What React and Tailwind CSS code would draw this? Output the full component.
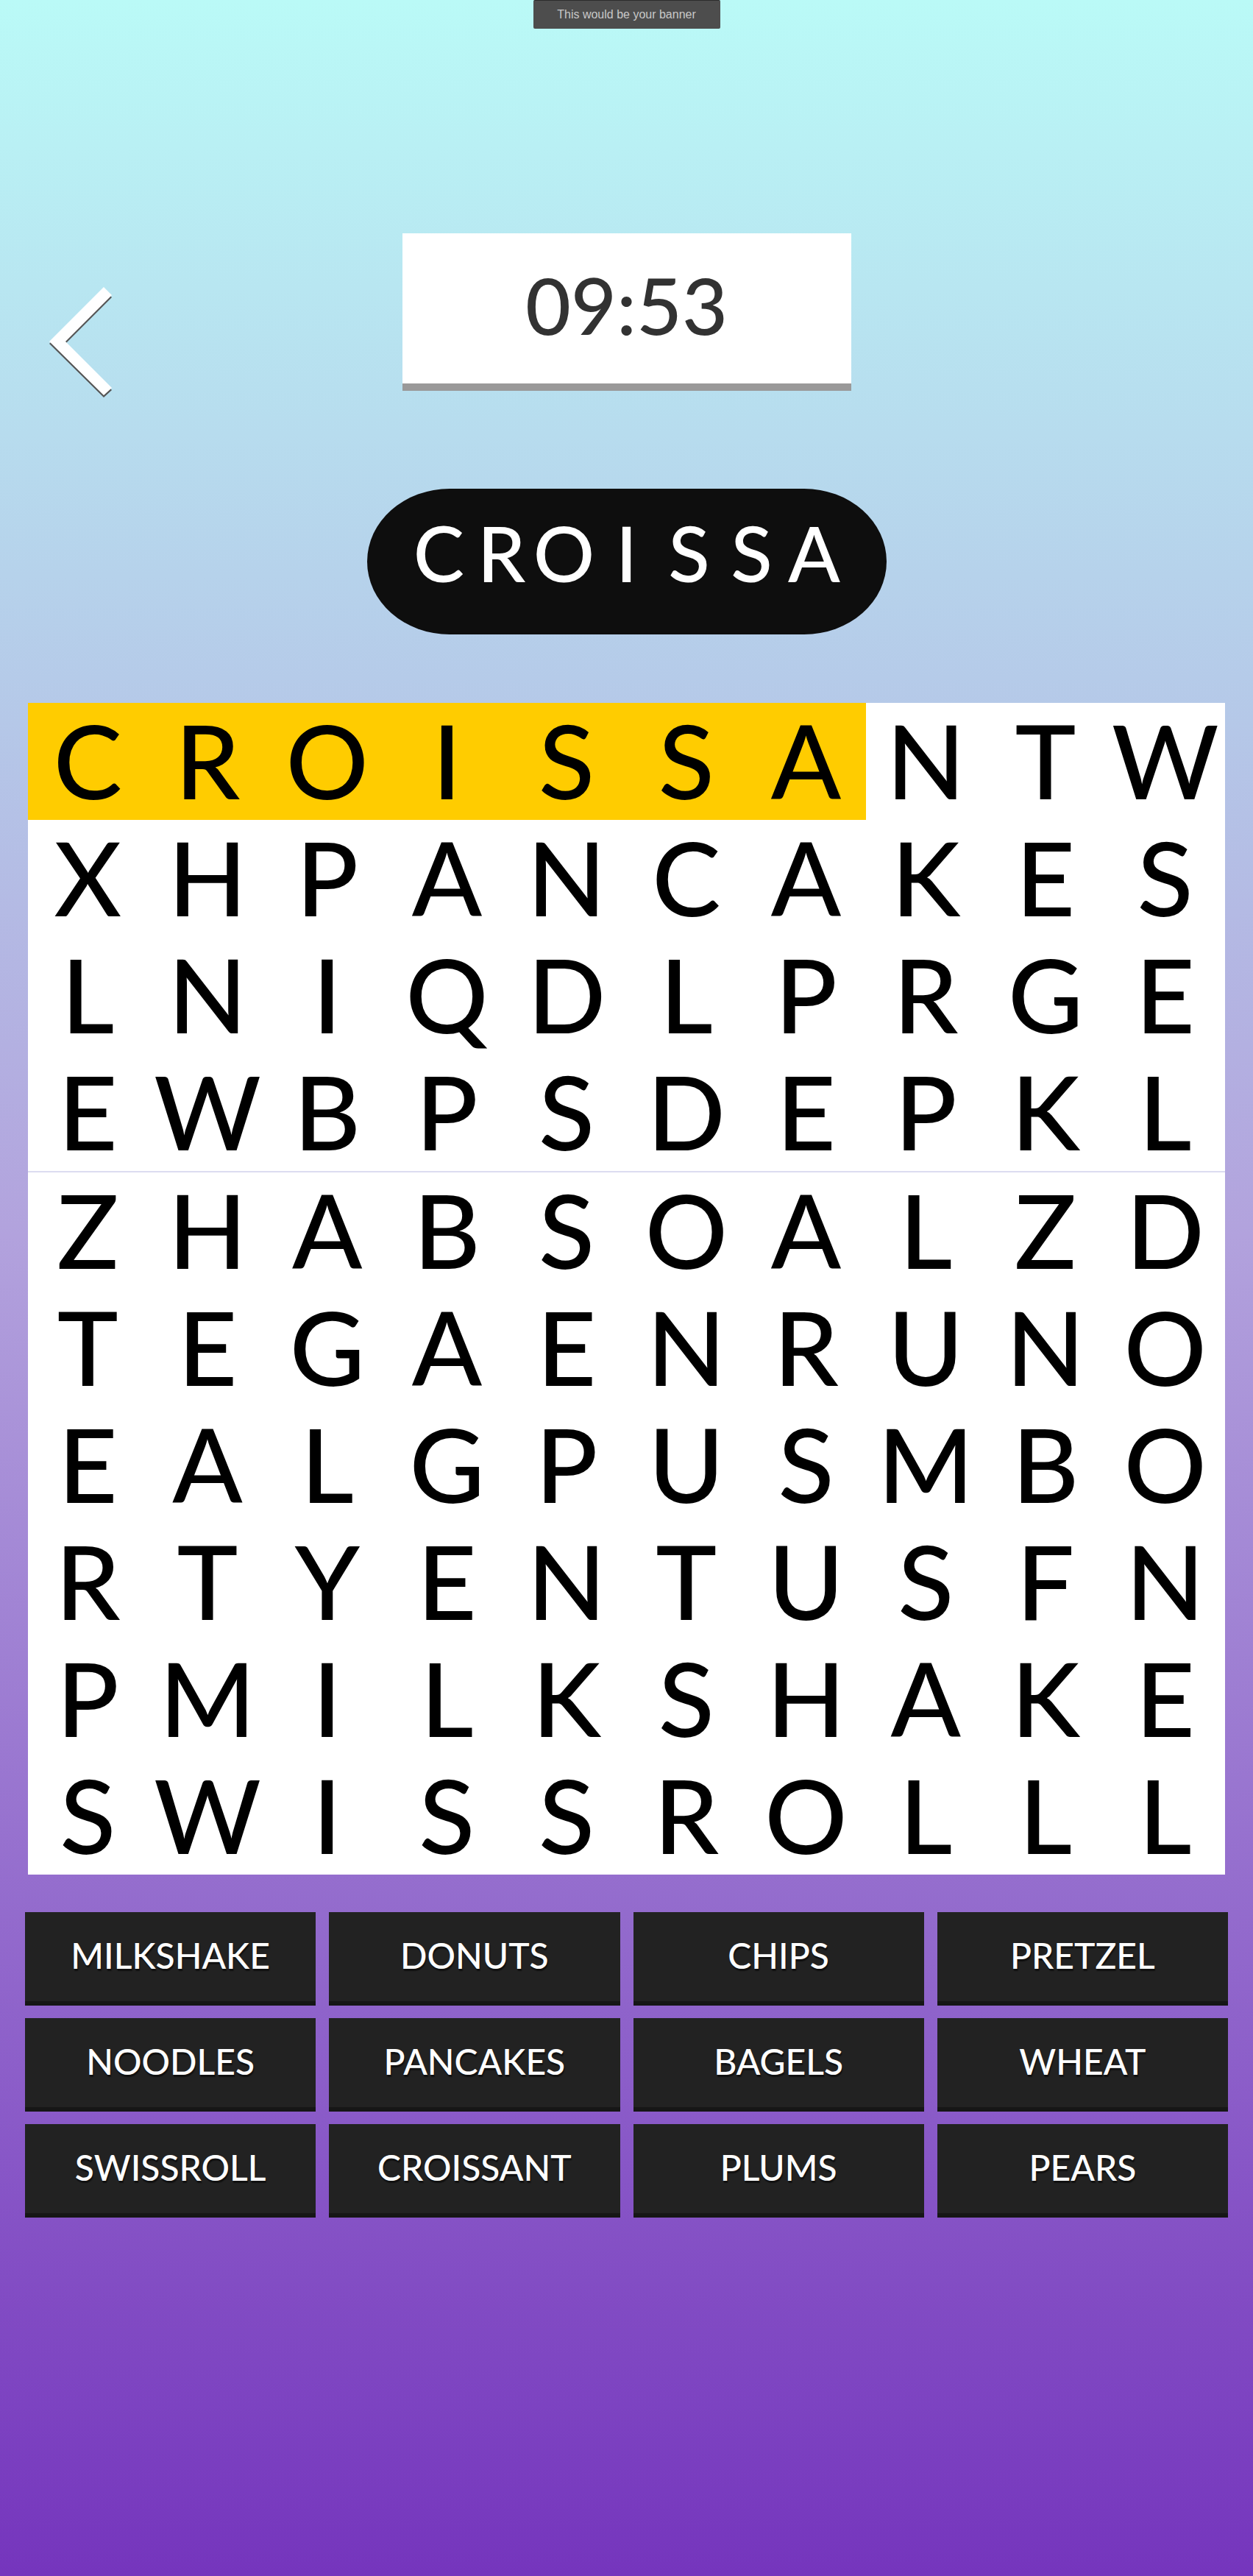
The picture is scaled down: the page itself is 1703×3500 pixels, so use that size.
const PUZZLE = [
  ["CROISSANTW", "XHPANCAKES", "LNIQDLPRGE", "EWBPSDEPKL"],
  ["ZHABSOALZD", "TEGAENRUNO", "EALGPUSMBO", "RTYENTUSFN", "PMILKSHAKE", "SWISSROLLL"],
];

const WORDS = [
  "MILKSHAKE", "DONUTS", "CHIPS", "PRETZEL",
  "NOODLES", "PANCAKES", "BAGELS", "WHEAT",
  "SWISSROLL", "CROISSANT", "PLUMS", "PEARS",
];

const SELECTION = "CROISSA";

function BackButton() {
  return (
    <button type="button" aria-label="Back" className="mt-[73px] cursor-pointer justify-self-start pl-[67px]">
      <svg width="86" height="150" viewBox="0 0 86 150" aria-hidden="true">
        <path d="M0 77L74 3L85 14L22 77L85 140L74 150L0 77Z" fill="#555" />
        <path d="M0 74L74 0L85 11L22 74L85 137L74 147L0 74Z" fill="#fff" />
      </svg>
    </button>
  );
}

function Row({ letters, selected }) {
  return (
    <div className="grid grid-cols-10 bg-white">
      {letters.split("").map((letter, i) => (
        <button
          type="button"
          key={i}
          className={
            "flex h-[159px] min-w-0 cursor-pointer items-center justify-center pb-1.5 text-[140px] leading-none font-medium text-black " +
            (i < selected ? "bg-[#ffcc00]" : "bg-white")
          }
        >
          {letter}
        </button>
      ))}
    </div>
  );
}

export default function App() {
  return (
    <main className="flex min-h-screen flex-col bg-[linear-gradient(to_bottom,#bafaf7_0%,#b5c8e8_28%,#b2a2dd_48%,#7535bd_100%)] pb-12 font-[Lato,sans-serif]">
      <div className="mx-auto flex h-[39px] w-[254px] items-center justify-center rounded-xs border-t border-[#2c2c2c] bg-[#4d4d4d] font-['Liberation_Sans',Arial,sans-serif] text-base text-[#c8c8c8]">
        This would be your banner
      </div>

      <header className="mt-[278px] grid grid-cols-[1fr_auto_1fr] items-start">
        <BackButton />
        <div
          role="timer"
          className="flex h-[214px] w-[610px] items-center justify-center border-b-10 border-[#9a9999] bg-white pb-3 text-[107px] leading-none font-medium text-[#323232]"
        >
          09:53
        </div>
      </header>

      <div className="mx-auto mt-[124px] flex h-[198px] w-[706px] items-center justify-center rounded-[112px/99px] bg-[#0e0e0e] pb-6 text-[104px] leading-none font-medium text-white">
        {SELECTION.split("").map((letter, i) => (
          <span key={i} className="w-[85px] text-center">
            {letter}
          </span>
        ))}
      </div>

      <section aria-label="Letters" className="mx-[38px] mt-[93px] flex flex-col gap-0.5 bg-[#dcdcf0]">
        {PUZZLE.map((rows, block) => (
          <div key={block}>
            {rows.map((letters, i) => (
              <Row key={i} letters={letters} selected={block === 0 && i === 0 ? SELECTION.length : 0} />
            ))}
          </div>
        ))}
      </section>

      <ul aria-label="Words to find" className="mx-[34px] mt-[51px] grid grid-cols-4 gap-x-[18px] gap-y-[17px]">
        {WORDS.map((word) => (
          <li
            key={word}
            className="flex h-[127px] items-center justify-center border-b-6 border-[#161616] bg-[#222222] pb-1 text-5xl leading-none font-medium text-white [text-shadow:1px_3px_1px_#111]"
          >
            {word}
          </li>
        ))}
      </ul>
    </main>
  );
}
